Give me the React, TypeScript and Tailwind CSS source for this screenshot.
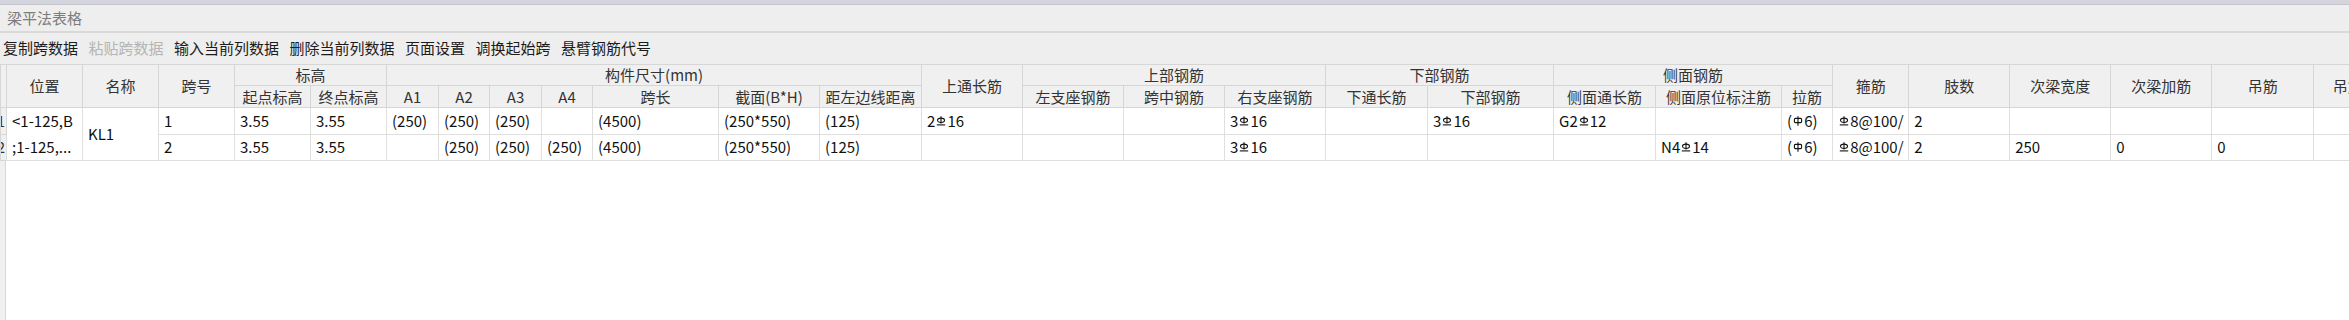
import React from "react";

// column widths, left to right (first is the scrolled-off row number column)
const colWidths = [
  "w-[6px]",
  "w-[76px]",
  "w-[76px]",
  "w-[76px]",
  "w-[76px]",
  "w-[76px]",
  "w-[52px]",
  "w-[51px]",
  "w-[52px]",
  "w-[51px]",
  "w-[126px]",
  "w-[101px]",
  "w-[102px]",
  "w-[101px]",
  "w-[101px]",
  "w-[101px]",
  "w-[101px]",
  "w-[102px]",
  "w-[126px]",
  "w-[102px]",
  "w-[126px]",
  "w-[51px]",
  "w-[76px]",
  "w-[101px]",
  "w-[101px]",
  "w-[101px]",
  "w-[102px]",
  "w-[98px]",
];

const toolbar = [
  { label: "复制跨数据" },
  { label: "粘贴跨数据", disabled: true },
  { label: "输入当前列数据" },
  { label: "删除当前列数据" },
  { label: "页面设置" },
  { label: "调换起始跨" },
  { label: "悬臂钢筋代号" },
];

// § = 三级钢 (HRB400), ¤ = 一级钢 (HPB300)
const rows: string[][] = [
  ["1", "3.55", "3.55", "(250)", "(250)", "(250)", "", "(4500)", "(250*550)", "(125)", "2§16", "", "", "3§16", "", "3§16", "G2§12", "", "(¤6)", "§8@100/200(2)", "2", "", "", "", ""],
  ["2", "3.55", "3.55", "", "(250)", "(250)", "(250)", "(4500)", "(250*550)", "(125)", "", "", "", "3§16", "", "", "", "N4§14", "(¤6)", "§8@100/200(2)", "2", "250", "0", "0", ""],
];

function Hrb400() {
  return (
    <svg width="10" height="10" viewBox="0 0 10 10" fill="none" stroke="currentColor" strokeWidth="1.1" className="inline-block align-[1px] mx-[1px]">
      <path d="M5 0.3V7.6" />
      <ellipse cx="5" cy="4.3" rx="3.5" ry="2.2" />
      <path d="M0.8 8.9H9.2" />
    </svg>
  );
}

function Hpb300() {
  return (
    <svg width="10" height="10" viewBox="0 0 10 10" fill="none" stroke="currentColor" strokeWidth="1.1" className="inline-block align-[1px] mx-[1px]">
      <path d="M5 0.3V9.7" />
      <rect x="1.4" y="2.4" width="7.2" height="4.2" rx="1" />
    </svg>
  );
}

function CellText({ text }: { text: string }) {
  const parts: React.ReactNode[] = [];
  let buf = "";
  text.split("").forEach((ch, i) => {
    if (ch === "§" || ch === "¤") {
      if (buf) parts.push(buf);
      buf = "";
      parts.push(ch === "§" ? <Hrb400 key={i} /> : <Hpb300 key={i} />);
    } else buf += ch;
  });
  if (buf) parts.push(buf);
  return <>{parts}</>;
}

const th = "border border-[#d6d6d6] bg-[#f0f0f0] p-0 font-normal text-[15px] leading-[20px] text-[#333] text-center whitespace-nowrap overflow-hidden";
const td = "border border-[#dfdfdf] px-[5px] py-0 text-[15px] leading-[20px] text-[#111] text-left whitespace-nowrap overflow-hidden align-middle";
const rn = "border border-[#d6d6d6] bg-[#f0f0f0] p-0 text-[15px] leading-[20px] text-[#333] overflow-hidden";

export default function App() {
  return (
    <div className="w-full h-[320px] flex flex-col overflow-hidden bg-white font-['Noto_Sans_CJK_SC',sans-serif]">
      <div className="h-[4px] bg-[#d4d4dc] border-b border-[#c4c4cc] box-content" />
      <div className="h-[28px] bg-[#eeeeee] flex items-center pl-[7px] text-[15px] text-[#7c7c7c] border-b-2 border-[#d9d9d9]">
        梁平法表格
      </div>
      <div className="h-[31px] bg-[#eeeeee] flex items-start pt-[5px] pl-[3px] gap-[10.5px] text-[15px] leading-[20px]">
        {toolbar.map((t) => (
          <span key={t.label} className={t.disabled ? "text-[#b5b5b5]" : "text-[#1c1c1c]"}>
            {t.label}
          </span>
        ))}
      </div>
      <div className="flex-1 flex flex-col overflow-hidden">
        <table className="table-fixed border-collapse w-[2411px] shrink-0">
          <colgroup>
            {colWidths.map((w, i) => (
              <col key={i} className={w} />
            ))}
          </colgroup>
          <thead>
            <tr className="h-[21px]">
              <th rowSpan={2} className={th} />
              <th rowSpan={2} className={th}>位置</th>
              <th rowSpan={2} className={th}>名称</th>
              <th rowSpan={2} className={th}>跨号</th>
              <th colSpan={2} className={th}>标高</th>
              <th colSpan={7} className={th}>构件尺寸(mm)</th>
              <th rowSpan={2} className={th}>上通长筋</th>
              <th colSpan={3} className={th}>上部钢筋</th>
              <th colSpan={2} className={th}>下部钢筋</th>
              <th colSpan={3} className={th}>侧面钢筋</th>
              <th rowSpan={2} className={th}>箍筋</th>
              <th rowSpan={2} className={th}>肢数</th>
              <th rowSpan={2} className={th}>次梁宽度</th>
              <th rowSpan={2} className={th}>次梁加筋</th>
              <th rowSpan={2} className={th}>吊筋</th>
              <th rowSpan={2} className={th}>吊筋锚固</th>
            </tr>
            <tr className="h-[22px]">
              <th className={th}>起点标高</th>
              <th className={th}>终点标高</th>
              <th className={th}>A1</th>
              <th className={th}>A2</th>
              <th className={th}>A3</th>
              <th className={th}>A4</th>
              <th className={th}>跨长</th>
              <th className={th}>截面(B*H)</th>
              <th className={th}>距左边线距离</th>
              <th className={th}>左支座钢筋</th>
              <th className={th}>跨中钢筋</th>
              <th className={th}>右支座钢筋</th>
              <th className={th}>下通长筋</th>
              <th className={th}>下部钢筋</th>
              <th className={th}>侧面通长筋</th>
              <th className={th}>侧面原位标注筋</th>
              <th className={th}>拉筋</th>
            </tr>
          </thead>
          <tbody>
            {rows.map((r, ri) => (
              <tr key={ri} className="h-[26px]">
                <td className={rn}>
                  <div className="w-[5px] flex justify-end pr-[1px] overflow-hidden">
                    <span>{ri + 1}</span>
                  </div>
                </td>
                {ri === 0 && (
                  <>
                    <td rowSpan={2} className={td + " leading-[26px]"}>
                      <div>&lt;1-125,B</div>
                      <div>;1-125,...</div>
                    </td>
                    <td rowSpan={2} className={td}>KL1</td>
                  </>
                )}
                {r.map((c, ci) => (
                  <td key={ci} className={td}>
                    {c.includes("@") ? (
                      <div className="w-[66px] overflow-hidden">
                        <CellText text={c} />
                      </div>
                    ) : (
                      <CellText text={c} />
                    )}
                  </td>
                ))}
              </tr>
            ))}
          </tbody>
        </table>
        <div className="flex-1 flex">
          <div className="w-[6px] bg-[#f0f0f0] border-r border-[#d6d6d6]" />
        </div>
      </div>
    </div>
  );
}
